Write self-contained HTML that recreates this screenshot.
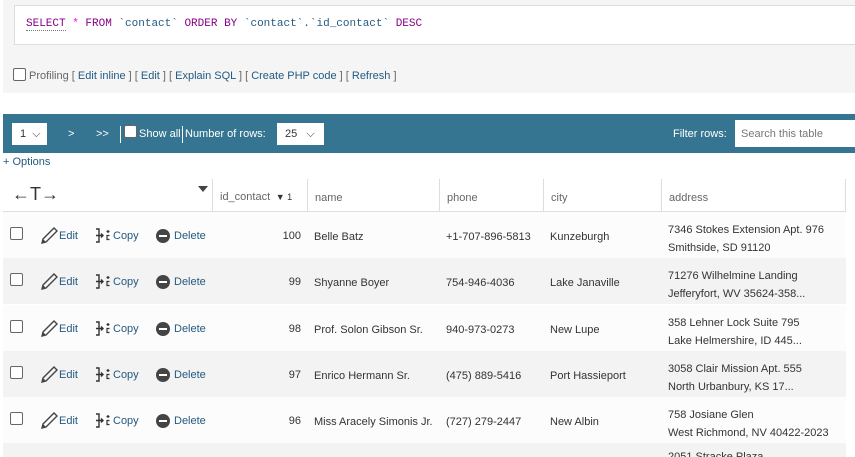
<!DOCTYPE html><html style="height:457px;overflow:hidden"><head><style>
body{margin:0;width:855px;height:457px;overflow:hidden;background:#fff;font-family:"Liberation Sans",sans-serif;font-size:11px;color:#333;position:relative}
.a{position:absolute;white-space:nowrap}
.lnk{color:#235a81}
.row{position:absolute;left:3px;width:843px;height:46px}
.cb{position:absolute;width:11px;height:11px;border:1px solid #666;border-radius:2px;background:#fff}
.hd{position:absolute;top:179px;height:33px;border-left:1px solid #ddd;color:#666;font-size:11px;line-height:36px;padding-left:7px;box-sizing:border-box}
</style></head><body>
<div class="a" style="left:3px;top:0;width:852px;height:93px;background:#f5f5f5"></div>
<div class="a" style="left:14px;top:5px;width:841px;height:40px;background:#fff;border:1px solid #ddd;border-right:none;box-sizing:border-box"></div>
<div class="a" style="left:26px;top:18px;font-family:'Liberation Mono',monospace;font-size:11px;color:#808"><span style="border-bottom:1px dotted #777">SELECT</span> <span style="color:#f0f">*</span> FROM <span style="color:#235a81">`contact`</span> ORDER BY <span style="color:#235a81">`contact`.`id_contact`</span> DESC</div>
<div class="cb" style="left:13px;top:68px"></div>
<div class="a" style="left:29px;top:70px;color:#666">Profiling [ <span class="lnk">Edit inline</span> ] [ <span class="lnk">Edit</span> ] [ <span class="lnk">Explain SQL</span> ] [ <span class="lnk">Create PHP code</span> ] [ <span class="lnk">Refresh</span> ]</div>
<div class="a" style="left:3px;top:114px;width:852px;height:39px;background:#367591"></div>
<div class="a" style="left:12px;top:123px;width:35px;height:22px;background:#fff"></div>
<div class="a" style="left:20px;top:128px;color:#333;font-size:11px">1 &nbsp;⌵</div>
<div class="a" style="left:68px;top:128px;color:#fff">&gt;</div>
<div class="a" style="left:96px;top:128px;color:#fff">&gt;&gt;</div>
<div class="a" style="left:120px;top:126px;width:1px;height:17px;background:#fff"></div>
<div class="cb" style="left:124px;top:125px"></div>
<div class="a" style="left:139px;top:128px;color:#fff">Show all</div>
<div class="a" style="left:182px;top:126px;width:1px;height:17px;background:#fff"></div>
<div class="a" style="left:185px;top:128px;color:#fff">Number of rows:</div>
<div class="a" style="left:277px;top:123px;width:47px;height:22px;background:#fff"></div>
<div class="a" style="left:285px;top:128px">25 &nbsp;&nbsp;⌵</div>
<div class="a" style="left:673px;top:128px;color:#fff">Filter rows:</div>
<div class="a" style="left:735px;top:120px;width:120px;height:27px;background:#fff"></div>
<div class="a" style="left:741px;top:128px;color:#777">Search this table</div>
<div class="a" style="left:3px;top:156px" ><span class="lnk">+ Options</span></div>
<div class="a" style="left:3px;top:211px;width:843px;height:1px;background:#ddd"></div>
<div class="a" style="left:12px;top:184px;font-size:18px;color:#333">←T→</div>
<div class="a" style="left:198px;top:186px;width:0;height:0;border:5px solid transparent;border-top:6px solid #444"></div>
<div class="hd" style="left:212px;width:95px">id_contact <span style="font-size:9px;color:#333">&nbsp;▼ 1</span></div>
<div class="hd" style="left:307px;width:132px;line-height:38px">name</div>
<div class="hd" style="left:439px;width:104px;line-height:38px">phone</div>
<div class="hd" style="left:543px;width:118px;line-height:38px">city</div>
<div class="hd" style="left:661px;width:185px;border-right:1px solid #ddd;line-height:38px">address</div>
<div class="row" style="top:212px;background:#fcfcfc"></div>
<div class="row" style="top:258px;background:#f3f3f3"></div>
<div class="row" style="top:305px;background:#fcfcfc"></div>
<div class="row" style="top:351px;background:#f3f3f3"></div>
<div class="row" style="top:397px;background:#fcfcfc"></div>
<div class="row" style="top:443px;height:14px;background:#f3f3f3;overflow:hidden"><div class="a" style="left:665px;top:8px">2051 Stracke Plaza</div></div>
<div id="rows"></div>
<script>
var d=[[100,"Belle Batz","+1-707-896-5813","Kunzeburgh","7346 Stokes Extension Apt. 976","Smithside, SD 91120"],
[99,"Shyanne Boyer","754-946-4036","Lake Janaville","71276 Wilhelmine Landing","Jefferyfort, WV 35624-358..."],
[98,"Prof. Solon Gibson Sr.","940-973-0273","New Lupe","358 Lehner Lock Suite 795","Lake Helmershire, ID 445..."],
[97,"Enrico Hermann Sr.","(475) 889-5416","Port Hassieport","3058 Clair Mission Apt. 555","North Urbanbury, KS 17..."],
[96,"Miss Aracely Simonis Jr.","(727) 279-2447","New Albin","758 Josiane Glen","West Richmond, NV 40422-2023"]];
var tops=[212,258,305,351,397],h="";
d.forEach(function(r,i){var c=tops[i]+23;
h+='<div class="cb" style="left:10px;top:'+(c-8)+'px"></div>';
h+='<svg class="a" style="left:40px;top:'+(c-8)+'px" width="18" height="18"><path d="M2 16 L3 12 L14 1 L17 4 L6 15 Z" fill="none" stroke="#444" stroke-width="1.4"/><path d="M2 16 L3 12 L6 15Z" fill="#444"/></svg>';
h+='<div class="a lnk" style="left:59px;top:'+(c-5)+'px">Edit</div>';
h+='<svg class="a" style="left:94px;top:'+(c-8)+'px" width="17" height="17"><path d="M2 2H5V15H2M2 8.5H9M7 6.5L9 8.5L7 10.5" fill="none" stroke="#333" stroke-width="1.4"/><path d="M14 3V6M12.5 4.5H15.5M15.5 8.5H13V12.5H15.5" fill="none" stroke="#333" stroke-width="1.2"/></svg>';
h+='<div class="a lnk" style="left:113px;top:'+(c-5)+'px">Copy</div>';
h+='<div class="a" style="left:156px;top:'+(c-6)+'px;width:14px;height:14px;border-radius:50%;background:#444"><div style="position:absolute;left:3px;top:6px;width:8px;height:2px;background:#fff"></div></div>';
h+='<div class="a lnk" style="left:174px;top:'+(c-5)+'px">Delete</div>';
h+='<div class="a" style="left:240px;width:61px;text-align:right;top:'+(c-5)+'px">'+r[0]+'</div>';
h+='<div class="a" style="left:314px;top:'+(c-4)+'px">'+r[1]+'</div>';
h+='<div class="a" style="left:446px;top:'+(c-4)+'px">'+r[2]+'</div>';
h+='<div class="a" style="left:550px;top:'+(c-4)+'px">'+r[3]+'</div>';
h+='<div class="a" style="left:668px;top:'+(c-14)+'px;line-height:18px">'+r[4]+'<br>'+r[5]+'</div>';
});
document.getElementById("rows").innerHTML=h;
</script>
</body></html>
